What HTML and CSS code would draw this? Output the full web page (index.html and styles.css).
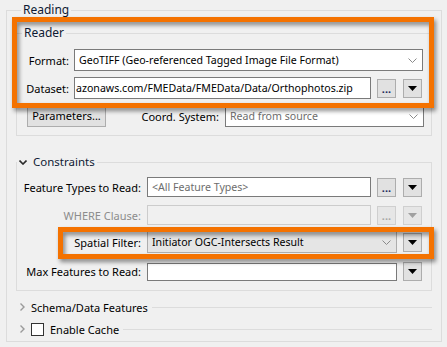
FILE: index.html
```html
<!DOCTYPE html>
<html lang="en">

<head>
     <meta charset="UTF-8">
     <meta name="viewport" content="width=device-width, initial-scale=1.0">
     <title>Reading</title>
     <link rel="stylesheet" href="styles.css">
</head>

<body>
     <fieldset class="group outer">
          <legend>Reading</legend>

          <fieldset class="group reader">
               <legend>Reader</legend>
               <div class="row first">
                    <label class="lbl short">Format:</label>
                    <div class="box combo format">
                         <span>GeoTIFF (Geo-referenced Tagged Image File Format)</span>
                         <svg class="chev" width="9" height="5" viewBox="0 0 9 5"><polyline points="0.5,0.5 4.5,4.5 8.5,0.5" /></svg>
                    </div>
               </div>
               <div class="row">
                    <label class="lbl short">Dataset:</label>
                    <div class="box field dataset"><span>azonaws.com/FMEData/FMEData/Data/Orthophotos.zip</span></div>
                    <button class="btn dots">...</button>
                    <button class="btn drop"><svg width="9" height="5" viewBox="0 0 9 5"><polygon points="0,0 9,0 4.5,5" /></svg></button>
               </div>
               <div class="row">
                    <button class="btn params">Parameters...</button>
                    <label class="lbl coord-lbl">Coord. System:</label>
                    <div class="box combo coord">
                         <span class="muted">Read from source</span>
                         <svg class="chev" width="9" height="5" viewBox="0 0 9 5"><polyline points="0.5,0.5 4.5,4.5 8.5,0.5" /></svg>
                    </div>
               </div>
          </fieldset>

          <fieldset class="group constraints">
               <legend>
                    <svg class="caret" width="8" height="5" viewBox="0 0 8 5"><polyline points="0.5,0.5 4,4 7.5,0.5" /></svg>
                    Constraints
               </legend>
               <div class="row first">
                    <label class="lbl long">Feature Types to Read:</label>
                    <div class="box field types"><span class="muted">&lt;All Feature Types&gt;</span></div>
                    <button class="btn dots">...</button>
                    <button class="btn drop"><svg width="9" height="5" viewBox="0 0 9 5"><polygon points="0,0 9,0 4.5,5" /></svg></button>
               </div>
               <div class="row where">
                    <label class="lbl long off">WHERE Clause:</label>
                    <div class="box field types disabled"></div>
                    <button class="btn dots disabled">...</button>
                    <button class="btn drop disabled"><svg width="9" height="5" viewBox="0 0 9 5"><polygon points="0,0 9,0 4.5,5" /></svg></button>
               </div>
               <div class="row spatial">
                    <label class="lbl long">Spatial Filter:</label>
                    <div class="box combo filter">
                         <span>Initiator OGC-Intersects Result</span>
                         <svg class="chev" width="9" height="5" viewBox="0 0 9 5"><polyline points="0.5,0.5 4.5,4.5 8.5,0.5" /></svg>
                    </div>
                    <button class="btn drop"><svg width="9" height="5" viewBox="0 0 9 5"><polygon points="0,0 9,0 4.5,5" /></svg></button>
               </div>
               <div class="row max">
                    <label class="lbl long">Max Features to Read:</label>
                    <div class="box field maxfield"></div>
                    <button class="btn drop"><svg width="9" height="5" viewBox="0 0 9 5"><polygon points="0,0 9,0 4.5,5" /></svg></button>
               </div>
          </fieldset>

          <div class="collapsed">
               <svg class="arrow" width="5" height="8" viewBox="0 0 5 8"><polyline points="0.5,0.5 4,4 0.5,7.5" /></svg>
               <span>Schema/Data Features</span>
          </div>
          <div class="collapsed">
               <svg class="arrow" width="5" height="8" viewBox="0 0 5 8"><polyline points="0.5,0.5 4,4 0.5,7.5" /></svg>
               <span class="check"></span>
               <span>Enable Cache</span>
          </div>
     </fieldset>

     <div class="callout callout-reader"></div>
     <div class="callout callout-spatial"></div>
</body>

</html>
```

FILE: styles.css
```css
body {
     margin: 0;
     padding-top: 3px;
     width: 447px;
     height: 347px;
     overflow: hidden;
     background: #f0f0f0;
     font-family: 'Noto Sans', 'Open Sans', sans-serif;
     font-size: 11px;
     color: #000;
     position: relative;
}

.group {
     margin: 0;
     padding: 0;
     border: 1px solid #dcdcdc;
     min-width: 0;
}

.group legend {
     padding: 0 2px;
     margin-left: 5px;
     line-height: 14px;
     font-size: 12px;
     color: #0e1a33;
}

.outer {
     margin: 0 5px 0 6px;
     padding: 9px 9px 1px 9px;
}

.reader {
     padding: 9px 0 8px 0;
}

.constraints {
     margin-top: 19px;
     padding: 8px 0 9px 0;
}

.constraints legend {
     margin-left: 0;
     display: flex;
     align-items: center;
     gap: 6px;
     font-size: 11.5px;
}

.caret polyline {
     fill: none;
     stroke: #2b2b2b;
     stroke-width: 1.6;
}

.row {
     display: flex;
     align-items: center;
     margin-top: 6px;
}

.row.first {
     margin-top: 0;
}

.row.where {
     margin-top: 8px;
}

.row.max {
     margin-top: 9px;
}

.lbl {
     text-align: right;
     white-space: nowrap;
     box-sizing: border-box;
}

.lbl.short {
     width: 57px;
     padding-right: 5px;
}

.lbl.long {
     width: 130px;
     padding-right: 6px;
}

.lbl.off {
     color: #8c8c8c;
}

.lbl.coord-lbl {
     width: 119px;
     padding-right: 6px;
}

.box {
     box-sizing: border-box;
     height: 22px;
     border: 1px solid #7a7a7a;
     background: #fff;
     display: flex;
     align-items: center;
     padding: 0 5px 0 4px;
     white-space: nowrap;
     overflow: hidden;
}

.box span {
     flex: 1;
     min-width: 0;
     overflow: hidden;
     font-size: 10.6px;
}

.muted {
     color: #6d6d6d;
}

.chev polyline {
     fill: none;
     stroke: #8a8a8a;
     stroke-width: 1;
}

.format {
     width: 349px;
}

.dataset {
     width: 297px;
     padding-left: 1px;
}

.coord {
     width: 199px;
}

.field.types {
     width: 224px;
     height: 20px;
}

.field.disabled {
     border-color: #cccccc;
     background: #f0f0f0;
}

.filter {
     width: 250px;
     background: #e5e5e5;
     border-color: #adadad;
}

.maxfield {
     width: 250px;
     height: 18px;
}

.btn {
     box-sizing: border-box;
     height: 19px;
     width: 19px;
     border: 1px solid #adadad;
     background: #e1e1e1;
     padding: 0;
     margin: 0 0 0 6px;
     font-family: inherit;
     font-size: 11px;
     display: flex;
     align-items: center;
     justify-content: center;
}

.btn.drop {
     margin-left: 7px;
}

.btn.drop polygon {
     fill: #000;
}

.btn.dots {
     font-weight: bold;
     line-height: 1;
     align-items: flex-end;
     padding-bottom: 3px;
     color: #1a2a5a;
}

.btn.disabled {
     border-color: #cfcfcf;
     background: #e6e6e6;
     color: #a8a8a8;
}

.btn.drop.disabled polygon {
     fill: #a0a0a0;
}

.spatial .btn.drop,
.max .btn.drop {
     margin-left: 6px;
}

.params {
     width: 79px;
     height: 22px;
     margin-left: 10px;
     padding-bottom: 1px;
}

.collapsed {
     display: flex;
     align-items: center;
     height: 22px;
     margin-top: 5px;
     padding-left: 4px;
     gap: 6px;
}

.collapsed + .collapsed {
     margin-top: 0;
}

.collapsed::after {
     content: "";
     flex: 1;
     border-top: 1px solid #dcdcdc;
     margin-left: -2px;
}

.arrow polyline {
     fill: none;
     stroke: #9a9a9a;
     stroke-width: 1.4;
}

.check {
     box-sizing: border-box;
     width: 13px;
     height: 13px;
     border: 1px solid #333;
     background: #fff;
}

/* orange annotation frames laid over the dialog */
.callout {
     position: absolute;
     box-sizing: border-box;
     border: 5px solid #f47200;
     filter: drop-shadow(2px 3px 2px rgba(0, 0, 0, 0.45));
}

.callout-reader {
     left: 12px;
     top: 17px;
     width: 422px;
     height: 91px;
}

.callout-spatial {
     left: 58px;
     top: 227px;
     width: 376px;
     height: 32px;
}
```
